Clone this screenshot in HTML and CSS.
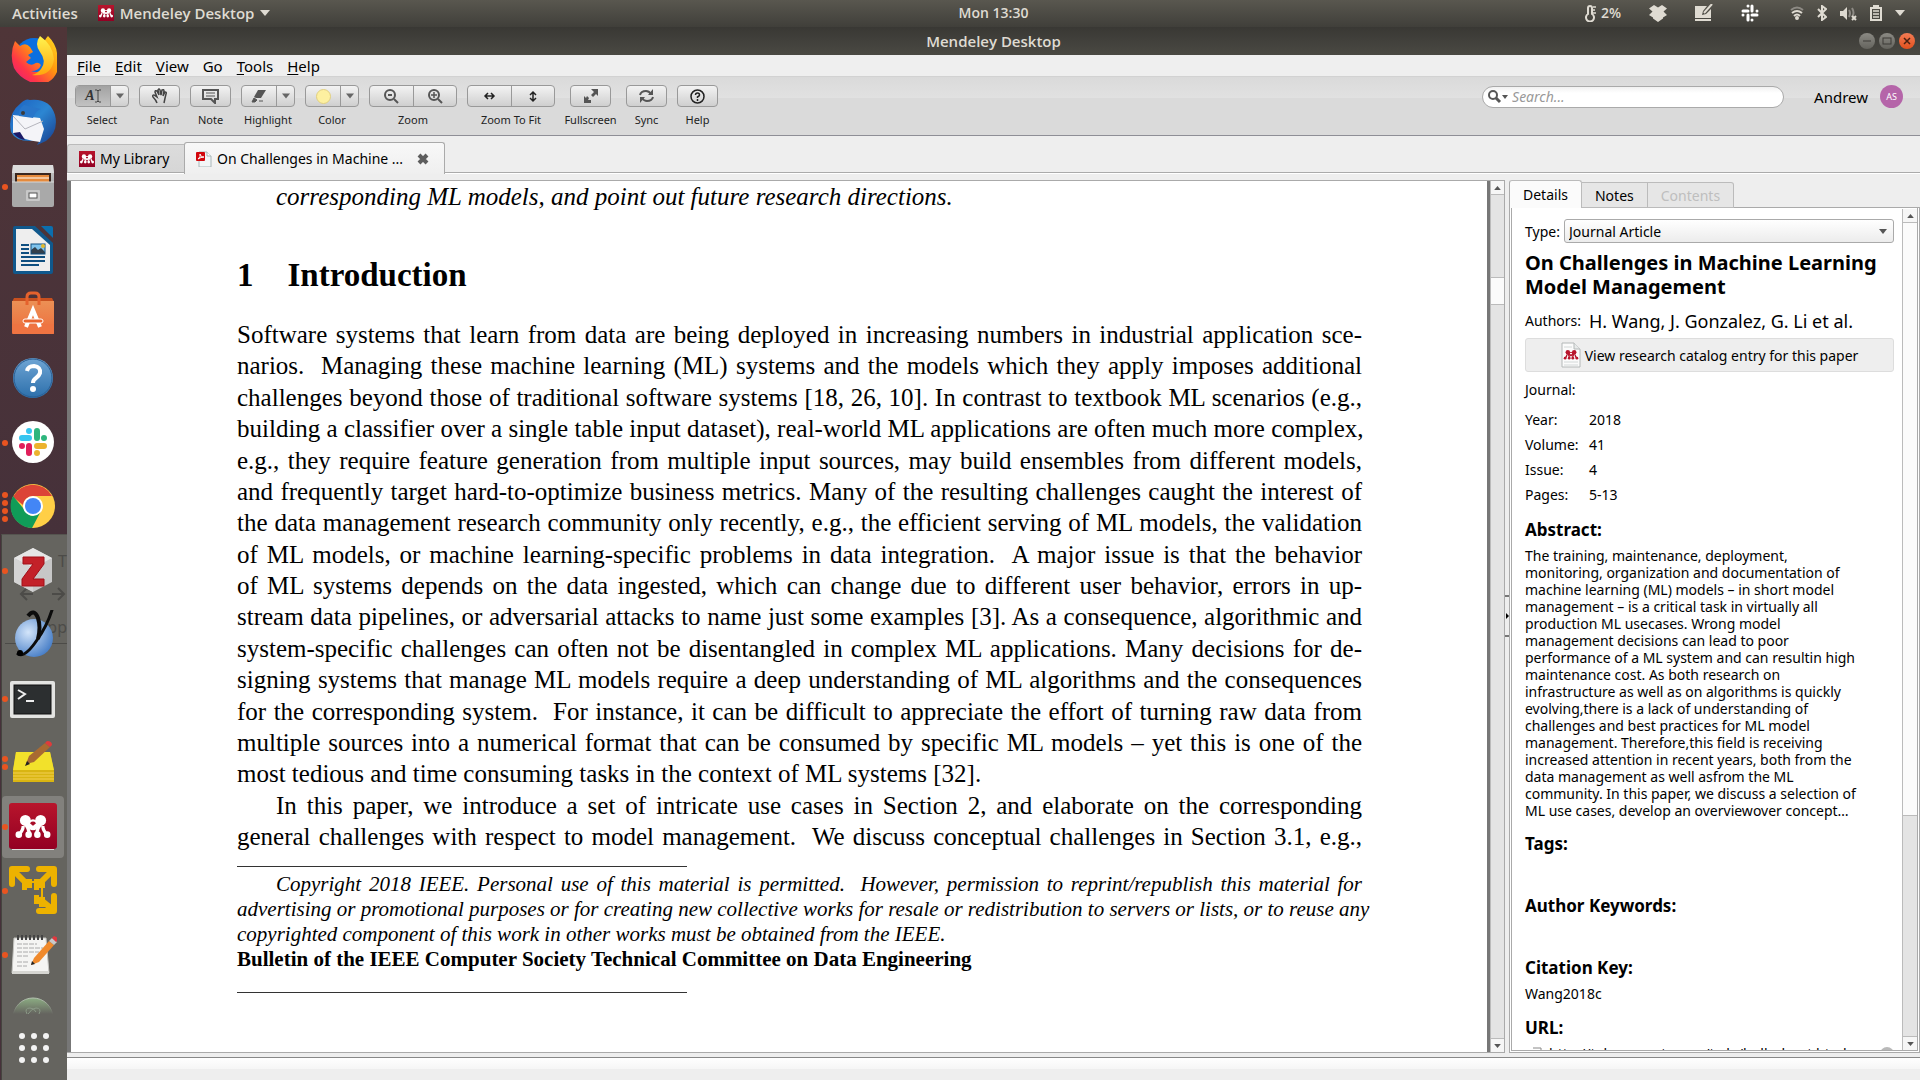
FILE: index.html
```html
<!DOCTYPE html>
<html lang="en">
<head>
    <meta charset="UTF-8">
    <meta name="viewport" content="width=device-width, initial-scale=1.0">
    <title>Mendeley Desktop</title>
    <link rel="stylesheet" href="styles.css">
</head>
<body>

  <!-- shared symbols -->
  <svg class="defs" aria-hidden="true">
    <defs>
      <linearGradient id="red" x1="0" y1="0" x2="0" y2="1"><stop offset="0" stop-color="#b8152c"/><stop offset="1" stop-color="#930023"/></linearGradient>
      <linearGradient id="blue" x1="0" y1="0" x2="0" y2="1"><stop offset="0" stop-color="#6fa5d4"/><stop offset="1" stop-color="#2c6fab"/></linearGradient>
      <linearGradient id="orange" x1="0" y1="0" x2="0" y2="1"><stop offset="0" stop-color="#ec9055"/><stop offset="1" stop-color="#ee6d3c"/></linearGradient>
      <linearGradient id="fox" x1="1" y1="0" x2="0" y2="1"><stop offset="0" stop-color="#ffe226"/><stop offset=".4" stop-color="#ff980e"/><stop offset=".7" stop-color="#ff3647"/><stop offset="1" stop-color="#e31587"/></linearGradient>
      <linearGradient id="flame" x1="0" y1="0" x2="0" y2="1"><stop offset="0" stop-color="#fff44f"/><stop offset="1" stop-color="#ffa60e"/></linearGradient>
      <linearGradient id="bird" x1="0" y1="0" x2="1" y2="1"><stop offset="0" stop-color="#1b5fc0"/><stop offset=".5" stop-color="#2c86d2"/><stop offset="1" stop-color="#173a8a"/></linearGradient>
      <linearGradient id="steel" x1="0" y1="0" x2="0" y2="1"><stop offset="0" stop-color="#c9c9c9"/><stop offset="1" stop-color="#8f8f8f"/></linearGradient>
      <radialGradient id="globe" cx=".35" cy=".35" r=".7"><stop offset="0" stop-color="#d3e5fa"/><stop offset="1" stop-color="#4a80c8"/></radialGradient>
      <linearGradient id="fade" x1="0" y1="0" x2="0" y2="1"><stop offset="0" stop-color="#8cad83"/><stop offset=".4" stop-color="#65645f"/></linearGradient>
      <linearGradient id="rim" x1="0" y1="0" x2="0" y2="1"><stop offset="0" stop-color="#b5c4b1"/><stop offset=".4" stop-color="#65645f"/></linearGradient>
      <symbol id="mendeley" viewBox="0 0 32 22">
        <path d="M3 18 Q7 14 7 10 M13 18 Q12 12 9 8 M16 12 L9 6 M16 12 L23 6 M19 18 Q20 12 23 8 M29 18 Q25 14 25 10" stroke="currentColor" stroke-width="3" fill="none"/>
        <circle cx="9" cy="5" r="5" fill="currentColor"/><circle cx="23" cy="5" r="5" fill="currentColor"/>
        <circle cx="16" cy="9" r="4" fill="none" stroke="currentColor" stroke-width="2"/>
        <circle cx="3" cy="18" r="3" fill="currentColor"/><circle cx="12" cy="18" r="3" fill="currentColor"/>
        <circle cx="20" cy="18" r="3" fill="currentColor"/><circle cx="29" cy="18" r="3" fill="currentColor"/>
      </symbol>
      <symbol id="logo" viewBox="0 0 16 16">
        <rect width="16" height="16" fill="url(#red)"/>
        <use href="#mendeley" x="1" y="3" width="14" height="10" color="#fff"/>
      </symbol>
      <symbol id="caret" viewBox="0 0 10 6"><path d="M0 0h10L5 6z" fill="currentColor"/></symbol>
      <symbol id="caret-up" viewBox="0 0 10 6"><path d="M0 6h10L5 0z" fill="currentColor"/></symbol>
    </defs>
  </svg>

  <header class="topbar">
    <div class="topbar-left">
      <a href="#">Activities</a>
      <a href="#" class="app-menu">
        <svg width="16" height="16"><use href="#logo"/></svg>
        Mendeley Desktop
        <svg width="10" height="6"><use href="#caret"/></svg>
      </a>
    </div>
    <time>Mon 13:30</time>
    <div class="tray">
      <span class="temp">
        <svg width="12" height="18" viewBox="0 0 12 18"><path d="M3 10V4a2 2 0 0 1 4 0v6a4 4 0 1 1-4 0z" fill="none" stroke="#dfdbd2" stroke-width="2"/><path d="M8 3h3M8 6h2M8 9h3" stroke="#dfdbd2" stroke-width="1.5"/></svg>
        2%
      </span>
      <svg class="tray-app" width="18" height="18" viewBox="0 0 18 18"><path d="M5 1l4 2.500 4-2.500 5 3.500-3.500 3L18 11l-4 2.500v1L9 18l-5-3.500v-1L0 11l3.500-3.500L0 4.500z" fill="#dfdbd2"/></svg>
      <svg class="tray-app" width="18" height="18" viewBox="0 0 18 18"><path d="M0 2h12L8 7l-1 4 4-1 5-5v9H0zM0 15h16v2H0z" fill="#dfdbd2"/><path d="M9 9L17 0" stroke="#dfdbd2" stroke-width="2"/></svg>
      <svg class="tray-app" width="18" height="18" viewBox="0 0 18 18"><path d="M7 7H2M7 2v0M11 7V2M16 7h0M7 11v5M2 11h0M11 11h5M11 16v0" stroke="#fff" stroke-width="3" stroke-linecap="round"/></svg>
      <svg class="tray-wifi" width="14" height="14" viewBox="0 0 14 14" fill="none" stroke="#dfdbd2" stroke-width="2"><path d="M1 4q6-5 12 0" stroke="#8d8a84"/><path d="M2 7q5-4 10 0M4 10q3-3 6 0"/><circle cx="7" cy="12" r="1"/></svg>
      <svg width="10" height="16" viewBox="0 0 10 16"><path d="M1 4l8 8-4 3V1l4 3-8 8" fill="none" stroke="#dfdbd2" stroke-width="2"/></svg>
      <svg width="17" height="15" viewBox="0 0 17 15"><path d="M0 5h3l4-4v13l-4-4H0z" fill="#dfdbd2"/><path d="M9 4q2 3 0 7M12 2q3 5 0 9" fill="none" stroke="#8d8a84" stroke-width="2"/><path d="M12 10l4 4M16 10l-4 4" stroke="#dfdbd2" stroke-width="2"/></svg>
      <svg width="12" height="16" viewBox="0 0 12 16"><path d="M1 3h10v12H1zM3 1h6" fill="none" stroke="#dfdbd2" stroke-width="2"/><path d="M3 6h6M3 9h6M3 12h6" stroke="#dfdbd2" stroke-width="1.500"/></svg>
      <svg width="10" height="6"><use href="#caret"/></svg>
    </div>
  </header>

  <div class="desktop">

    <nav class="dock" aria-label="Dock">
      <div class="behind" aria-hidden="true">
        <span>T</span>
        <svg width="48" height="14" viewBox="0 0 48 14"><path d="M14 7H2M8 1L2 7l6 6M33 7h12M39 1l6 6-6 6" fill="none" stroke="#4c4b48" stroke-width="2"/></svg>
        <span class="line">App</span>
      </div>

      <button class="dock-item" aria-label="Firefox">
        <svg viewBox="0 0 48 48"><circle cx="25" cy="23" r="19" fill="#0a6fe0"/><path d="M6 7l5 5q6-4 10 1l3 5-5 3 3 3-5 4q4 4 8 2 4-3 7 1-2 6-10 6 8 3 14-3 5-7 0-15-4-10 3-17 8 8 9 17 3 3 2 12-3 17-19 20Q12 47 5 34 0 20 6 7z" fill="url(#fox)"/><path d="M31 2q-6 8 0 16 7 9 1 17-4 5-9 6 20 2 22-16Q44 11 31 2z" fill="url(#flame)"/></svg>
      </button>
      <button class="dock-item" aria-label="Thunderbird">
        <svg viewBox="0 0 48 48"><path d="M12 5q5-5 9-3 20-2 25 15 4 16-9 26l-9 4 3-5Q8 46 2 34-2 16 12 5z" fill="url(#bird)"/><path d="M4 17l27 3 4 11-4 13Q14 42 4 35z" fill="#f4f4f8"/><path d="M4 18l12 13 18-8" fill="none" stroke="#b5b5bd"/><path d="M15 7q-6 4-5 11l14 2q3-8 8-9" fill="#2976ca"/><path d="M4 35q5 6 12 7l-5-8z" fill="#1c1b68"/><circle cx="14" cy="15" r="2" fill="#3b3b3b"/></svg>
      </button>
      <button class="dock-item" aria-label="Files">
        <i class="dot"></i>
        <svg viewBox="0 0 48 48"><path d="M4 3h40l1 8v30q0 2-2 2H5q-2 0-2-2V11z" fill="url(#steel)"/><path d="M4 3h40l1 8H3z" fill="#dcdcdc"/><path d="M6 11h36v9H6z" fill="#3a2720"/><path d="M8 13h32v8H8z" fill="#e58a3c"/><path d="M8 16h32" stroke="#fff" stroke-width="1"/><path d="M3 20h42v23q0 2-2 2H5q-2 0-2-2z" fill="#a9a9a9"/><path d="M3 20h42" stroke="#d8d8d8"/><rect x="17" y="28" width="14" height="11" rx="1" fill="#c8c8c8"/><rect x="20" y="31" width="8" height="5" fill="#fff" stroke="#555"/></svg>
      </button>
      <button class="dock-item" aria-label="Writer">
        <svg viewBox="0 0 48 48"><path d="M6 0h20l18 17v29q0 2-2 2H6q-2 0-2-2V2q0-2 2-2z" fill="#10588c"/><path d="M32 0h10q2 0 2 2v10z" fill="#0b6fae"/><path d="M7 3h16l18 16v26H7z" fill="#eee"/><path d="M12 19h8M12 23h8M12 27h8M12 31h24M12 35h24M12 39h18" stroke="#0f4f80" stroke-width="2"/><rect x="22" y="18" width="14" height="10" fill="#7fc3ec"/><path d="M22 28v-4l4-3 3 3 3-2 4 4v2z" fill="#33404c"/><rect x="22" y="18" width="14" height="10" fill="none" stroke="#0f4f80"/><circle cx="34" cy="20" r="2" fill="#e5b92a"/></svg>
      </button>
      <button class="dock-item" aria-label="Ubuntu Software">
        <svg viewBox="0 0 48 48"><path d="M5 8h38l2 4H3z" fill="#c8501f"/><path d="M3 11h42v32q0 1-1 1H4q-1 0-1-1z" fill="url(#orange)"/><path d="M3 34h42v9q0 1-1 1H4z" fill="#ef7442"/><path d="M18 15V7q0-4 4-4h4q4 0 4 4v8" fill="none" stroke="#e5622d" stroke-width="3"/><path d="M17 37l7-17 7 17" fill="none" stroke="#fff" stroke-width="4"/><rect x="14" y="29" width="20" height="4" rx="2" fill="#e9652f" stroke="#fff"/></svg>
      </button>
      <button class="dock-item" aria-label="Help">
        <svg viewBox="0 0 48 48"><circle cx="24" cy="24" r="20" fill="url(#blue)"/><circle cx="24" cy="24" r="19" fill="none" stroke="#2a5f94" stroke-width="1"/><path d="M18 17q1-5 7-5 7 1 6 7-1 3-4 5-3 2-3 5" fill="none" stroke="#fff" stroke-width="4"/><circle cx="24" cy="35" r="3" fill="#fff"/></svg>
      </button>
      <button class="dock-item" aria-label="Slack">
        <i class="dot"></i>
        <svg viewBox="0 0 48 48"><circle cx="24" cy="24" r="21" fill="#fff"/><g fill="none" stroke-width="6" stroke-linecap="round"><path d="M20 20h-7M20 13v0" stroke="#36c5f0"/><path d="M28 20v-7M35 20v0" stroke="#2eb67d"/><path d="M20 28v7M13 28v0" stroke="#e01e5a"/><path d="M28 28h7M28 35v0" stroke="#ecb22e"/></g></svg>
      </button>
      <button class="dock-item" aria-label="Chrome">
        <i class="dot"></i><i class="dot"></i><i class="dot"></i><i class="dot"></i>
        <svg viewBox="0 0 48 48"><circle cx="24" cy="24" r="22" fill="#ffcf46"/><path d="M4 15A22 22 0 0 1 43 14H24a10 10 0 0 0-10 9z" fill="#dc4437"/><path d="M4 14A22 22 0 0 0 23 46l9-17-10 5-8-8z" fill="#109c58"/><circle cx="24" cy="24" r="10" fill="#fff"/><circle cx="24" cy="24" r="8" fill="#4386f5"/></svg>
      </button>
      <button class="dock-item" aria-label="Zotero">
        <i class="dot"></i>
        <svg viewBox="0 0 48 48"><path d="M24 2l19 10v24L24 46 5 36V12z" fill="#c7c7c7"/><path d="M24 2l19 10-19 10L5 12z" fill="#e6e6e6"/><path d="M24 22v24L5 36V12z" fill="#d4d4d4"/><path d="M14 11h21v7L24 33h11v7H13v-7l11-15H14z" fill="#c32129" stroke="#a01018"/></svg>
      </button>
      <button class="dock-item" aria-label="Yate">
        <svg viewBox="0 0 48 48"><circle cx="25" cy="28" r="19" fill="url(#globe)"/><path d="M19 6q6-8 10 2 3 9 0 21" fill="none" stroke="#0c0c0c" stroke-width="4"/><path d="M43 0Q38 16 28 30 16 48 9 44" fill="none" stroke="#0c0c0c" stroke-width="3" stroke-linecap="round"/><circle cx="11" cy="43" r="3"/></svg>
      </button>
      <button class="dock-item" aria-label="Terminal">
        <i class="dot"></i>
        <svg viewBox="0 0 48 48"><rect x="1" y="7" width="45" height="37" rx="2" fill="#e4e4e2"/><rect x="5" y="11" width="37" height="29" fill="#2c2f30" stroke="#111"/><path d="M9 16l7 4-7 5" fill="none" stroke="#eee" stroke-width="2"/><path d="M17 27h8" stroke="#eee" stroke-width="2"/></svg>
      </button>
      <button class="dock-item" aria-label="Notes">
        <i class="dot"></i><i class="dot"></i>
        <svg viewBox="0 0 48 48"><path d="M7 14h34l4 19v11H4V33z" fill="#d9b512"/><path d="M7 14h34l4 18H4z" fill="#f2e12b"/><path d="M4 35h41M4 38h41M4 41h41" stroke="#f3cf52"/><path d="M17 26l3-8L36 5l5 4-16 15z" fill="#a86a32"/><path d="M36 5l2-2q5 0 5 4l-2 2z" fill="#e03b3b"/><path d="M16 28l2-5 3 3z" fill="#222"/></svg>
      </button>
      <button class="dock-item active" aria-label="Mendeley Desktop">
        <i class="dot"></i>
        <svg viewBox="0 0 48 48"><rect y="1" width="48" height="46" rx="3" fill="url(#red)"/><path d="M3 47.500h42" stroke="#ddd"/><use href="#mendeley" x="5" y="13" width="38" height="24" color="#fff"/></svg>
      </button>
      <button class="dock-item" aria-label="yEd">
        <i class="dot"></i>
        <svg viewBox="0 0 48 48"><path d="M3 18V3h15M5 5l11 11M45 18V3H30M43 5L32 16M30 45h15V30M43 43L32 34" fill="none" stroke="#edb200" stroke-width="6" stroke-linecap="round" stroke-linejoin="round"/><path d="M13 13h10v9h-5v2h-5zM25 13h11v9h-6v2h-5zM25 29h5v2h6v10h-6v-3h-5z" fill="#edb200"/><path d="M20 16h12M33 20v14" stroke="#edb200" stroke-width="2"/></svg>
      </button>
      <button class="dock-item" aria-label="Text Editor">
        <i class="dot"></i>
        <svg viewBox="0 0 48 48"><path d="M5 8h32l3 35H3z" fill="#f5f5f3" stroke="#c4c4c0"/><path d="M3 41h37v3H3z" fill="#d6d6d2"/><path d="M8 14h20M8 18h26M8 22h22M8 26h12M8 32h12M8 36h10" stroke="#aaa" stroke-dasharray="5 1"/><path d="M9 5v5M13 5v5M17 5v5M21 5v5M25 5v5M29 5v5M33 5v5" stroke="#444" stroke-width="2"/><path d="M22 35l3-7L40 11l5 4-15 17z" fill="#f08a2c"/><path d="M40 11l3-3 5 4-3 3z" fill="#c9c9c9"/><path d="M43 8l2-2q4 1 4 4l-2 2z" fill="#e0383f"/><path d="M22 35l1-4 3 3z" fill="#222"/></svg>
      </button>
      <button class="dock-item cut" aria-label="Atom">
        <svg viewBox="0 0 48 48"><circle cx="24" cy="24" r="20" fill="url(#fade)" stroke="url(#rim)"/><path d="M18 20q-3-6 3-6 4 0 6 4M30 20q3-6-3-6-4 0-8 6" fill="none" stroke="#8b9a87"/></svg>
      </button>
      <button class="show-apps" aria-label="Show Applications">
        <svg width="30" height="30" viewBox="0 0 30 30" fill="#f3f3f3"><circle cx="3" cy="3" r="3"/><circle cx="15" cy="3" r="3"/><circle cx="27" cy="3" r="3"/><circle cx="3" cy="15" r="3"/><circle cx="15" cy="15" r="3"/><circle cx="27" cy="15" r="3"/><circle cx="3" cy="27" r="3"/><circle cx="15" cy="27" r="3"/><circle cx="27" cy="27" r="3"/></svg>
      </button>
    </nav>

    <main class="window">
      <div class="titlebar">
        <span class="title">Mendeley Desktop</span>
        <div class="window-buttons">
          <button aria-label="Minimize"><svg viewBox="0 0 16 16"><path d="M4 8h8" stroke="#3c3b37"/></svg></button>
          <button aria-label="Maximize"><svg viewBox="0 0 16 16"><rect x="4" y="5" width="8" height="6" fill="none" stroke="#3c3b37"/></svg></button>
          <button class="close" aria-label="Close"><svg viewBox="0 0 16 16"><path d="M5 5l6 6M11 5l-6 6" stroke="#4a2010" stroke-width="1.500"/></svg></button>
        </div>
      </div>

      <nav class="menubar">
        <a href="#"><u>F</u>ile</a>
        <a href="#"><u>E</u>dit</a>
        <a href="#"><u>V</u>iew</a>
        <a href="#">Go</a>
        <a href="#"><u>T</u>ools</a>
        <a href="#"><u>H</u>elp</a>
      </nav>

      <div class="toolbar">
        <div class="tool">
          <div class="buttons">
            <button class="main pressed" aria-label="Select"><span class="letter">A</span><svg width="6" height="14" viewBox="0 0 6 14"><path d="M0 1h2l1 1 1-1h2M3 2v10M0 13h2l1-1 1 1h2" fill="none" stroke="#444"/></svg></button>
            <button class="arrow" aria-label="Select options"><svg width="10" height="6"><use href="#caret"/></svg></button>
          </div>
          <span>Select</span>
        </div>
        <div class="tool">
          <div class="buttons">
            <button class="single" aria-label="Pan"><svg width="18" height="18" viewBox="0 0 18 18"><path d="M6 16q-1-3-4-6-1-2 1-2l3 2-2-5q0-2 2-1l2 4-1-5q1-2 2 0l1 5 1-5q2-1 2 1l-1 5 2-4q2 0 1 2-1 4-2 9" fill="none" stroke="#444" stroke-width="1.500"/></svg></button>
          </div>
          <span>Pan</span>
        </div>
        <div class="tool">
          <div class="buttons">
            <button class="single" aria-label="Note"><svg width="17" height="15" viewBox="0 0 17 15"><path d="M1 1h15v9h-3v4l-4-4H1z" fill="none" stroke="#555" stroke-width="2"/><path d="M4 4h9M4 7h9" stroke="#555"/></svg></button>
          </div>
          <span>Note</span>
        </div>
        <div class="tool">
          <div class="buttons">
            <button class="main" aria-label="Highlight"><svg width="16" height="14" viewBox="0 0 16 14"><path d="M7 1h8l-5 8H5L3 8z" fill="#555"/><path d="M3 9l3 2-2 2H1zM8 12h4" fill="#555" stroke="#555"/></svg></button>
            <button class="arrow" aria-label="Highlight options"><svg width="10" height="6"><use href="#caret"/></svg></button>
          </div>
          <span>Highlight</span>
        </div>
        <div class="tool">
          <div class="buttons">
            <button class="main" aria-label="Color"><i class="swatch"></i></button>
            <button class="arrow" aria-label="Color options"><svg width="10" height="6"><use href="#caret"/></svg></button>
          </div>
          <span>Color</span>
        </div>
        <div class="tool">
          <div class="buttons">
            <button class="wide" aria-label="Zoom out"><svg width="15" height="15" viewBox="0 0 15 15"><circle cx="6" cy="6" r="5" fill="none" stroke="#555" stroke-width="2"/><path d="M4 6h4" stroke="#555" stroke-width="2"/><path d="M10 10l4 4" stroke="#555" stroke-width="2"/></svg></button>
            <button class="wide" aria-label="Zoom in"><svg width="15" height="15" viewBox="0 0 15 15"><circle cx="6" cy="6" r="5" fill="none" stroke="#555" stroke-width="2"/><path d="M3 6h6M6 3v6" stroke="#555" stroke-width="1.500"/><path d="M10 10l4 4" stroke="#555" stroke-width="2"/></svg></button>
          </div>
          <span>Zoom</span>
        </div>
        <div class="tool">
          <div class="buttons">
            <button class="wide" aria-label="Fit width"><svg width="13" height="12" viewBox="0 0 13 12"><path d="M2 6h9M5 3L2 6l3 3M8 3l3 3-3 3" fill="none" stroke="#222" stroke-width="1.500"/></svg></button>
            <button class="wide" aria-label="Fit height"><svg width="12" height="13" viewBox="0 0 12 13"><path d="M6 2v9M3 5l3-3 3 3M3 8l3 3 3-3" fill="none" stroke="#222" stroke-width="1.500"/></svg></button>
          </div>
          <span>Zoom To Fit</span>
        </div>
        <div class="tool full">
          <div class="buttons">
            <button class="single" aria-label="Fullscreen"><svg width="14" height="14" viewBox="0 0 14 14"><path d="M7 0h7v7l-2-2-3 3-2-2 3-3zM0 7l2 2 1-2 2 2-1 2h3v3H0z" fill="#555"/></svg></button>
          </div>
          <span>Fullscreen</span>
        </div>
        <div class="tool">
          <div class="buttons">
            <button class="single" aria-label="Sync"><svg width="15" height="14" viewBox="0 0 15 14"><path d="M1 6q1-4 6-4 3 0 5 3M14 8q-1 4-6 4-3 0-5-3" fill="none" stroke="#555" stroke-width="2"/><path d="M14 0v6H9zM1 14V8h5z" fill="#555"/></svg></button>
          </div>
          <span>Sync</span>
        </div>
        <div class="tool">
          <div class="buttons">
            <button class="single" aria-label="Help"><svg width="15" height="15" viewBox="0 0 15 15"><circle cx="7.500" cy="7.500" r="6.500" fill="none" stroke="#222" stroke-width="1.500"/><path d="M5.500 6q0-2 2-2t2 2q0 1-2 2v1M7.500 10v2" fill="none" stroke="#222" stroke-width="1.500"/></svg></button>
          </div>
          <span>Help</span>
        </div>

        <div class="account">
          <label class="search">
            <svg width="20" height="14" viewBox="0 0 20 14"><circle cx="5" cy="5" r="4" fill="none" stroke="#555" stroke-width="2"/><path d="M8 8l4 4" stroke="#555" stroke-width="3"/><path d="M14 5h6l-3 4z" fill="#555"/></svg>
            <input type="text" placeholder="Search..." aria-label="Search">
          </label>
          <span class="user">Andrew</span>
          <span class="avatar">AS</span>
        </div>
      </div>

      <div class="tabs">
        <a href="#" class="tab">
          <svg width="16" height="16"><use href="#logo"/></svg>
          My Library
        </a>
        <div class="tab current">
          <svg width="16" height="16" viewBox="0 0 16 16"><path d="M3 1h8l4 4v11H3z" fill="#f2f6f7" stroke="#a9b6b8"/><path d="M11 1v4h4" fill="#fff" stroke="#a9b6b8"/><rect y="1" width="9" height="9" rx="1" fill="#d2060c"/><path d="M2 8q3-2 2-5 1 4 4 3-3 0-6 2" fill="none" stroke="#fff"/></svg>
          <span>On Challenges in Machine ...</span>
          <button aria-label="Close tab"><svg width="12" height="12" viewBox="0 0 12 12"><path d="M2 2l8 8M10 2l-8 8" stroke="#5d5d5d" stroke-width="4"/></svg></button>
        </div>
      </div>

      <div class="content">
        <div class="viewer">
          <article class="page">
            <p class="summary">corresponding ML models, and point out future research directions.</p>
            <h1><span>1</span>Introduction</h1>
            <div class="body-text">
              <span>Software systems that learn from data are being deployed in increasing numbers in industrial application sce-</span>
              <span>narios.&nbsp; Managing these machine learning (ML) systems and the models which they apply imposes additional</span>
              <span>challenges beyond those of traditional software systems [18, 26, 10]. In contrast to textbook ML scenarios (e.g.,</span>
              <span>building a classifier over a single table input dataset), real-world ML applications are often much more complex,</span>
              <span>e.g., they require feature generation from multiple input sources, may build ensembles from different models,</span>
              <span>and frequently target hard-to-optimize business metrics. Many of the resulting challenges caught the interest of</span>
              <span>the data management research community only recently, e.g., the efficient serving of ML models, the validation</span>
              <span>of ML models, or machine learning-specific problems in data integration.&nbsp; A major issue is that the behavior</span>
              <span>of ML systems depends on the data ingested, which can change due to different user behavior, errors in up-</span>
              <span>stream data pipelines, or adversarial attacks to name just some examples [3]. As a consequence, algorithmic and</span>
              <span>system-specific challenges can often not be disentangled in complex ML applications. Many decisions for de-</span>
              <span>signing systems that manage ML models require a deep understanding of ML algorithms and the consequences</span>
              <span>for the corresponding system.&nbsp; For instance, it can be difficult to appreciate the effort of turning raw data from</span>
              <span>multiple sources into a numerical format that can be consumed by specific ML models – yet this is one of the</span>
              <span class="last">most tedious and time consuming tasks in the context of ML systems [32].</span>
              <span class="indent">In this paper, we introduce a set of intricate use cases in Section 2, and elaborate on the corresponding</span>
              <span>general challenges with respect to model management.&nbsp; We discuss conceptual challenges in Section 3.1, e.g.,</span>
            </div>
            <hr>
            <div class="footnote">
              <span class="indent">Copyright 2018 IEEE. Personal use of this material is permitted.&nbsp; However, permission to reprint/republish this material for</span>
              <span>advertising or promotional purposes or for creating new collective works for resale or redistribution to servers or lists, or to reuse any</span>
              <span class="last">copyrighted component of this work in other works must be obtained from the IEEE.</span>
              <strong>Bulletin of the IEEE Computer Society Technical Committee on Data Engineering</strong>
            </div>
            <hr class="end">
          </article>
          <div class="scrollbar">
            <button aria-label="Scroll up"><svg width="7" height="4"><use href="#caret-up"/></svg></button>
            <div class="track"><div class="thumb"></div></div>
            <button aria-label="Scroll down"><svg width="7" height="4"><use href="#caret"/></svg></button>
          </div>
        </div>

        <div class="splitter"><svg width="4" height="42" viewBox="0 0 4 42"><path d="M0 1h4M0 41h4" stroke="#000"/><path d="M1 18l3 3-3 3z"/></svg></div>

        <aside class="side">
          <nav class="side-tabs">
            <button class="on">Details</button>
            <button>Notes</button>
            <button disabled>Contents</button>
          </nav>
          <div class="pane">
            <div class="details">
              <div class="type">
                <label for="type">Type:</label>
                <div class="select">
                  <select id="type"><option>Journal Article</option></select>
                  <svg width="8" height="5"><use href="#caret"/></svg>
                </div>
              </div>
              <h2>On Challenges in Machine Learning<br>Model Management</h2>
              <div class="field authors"><span>Authors:</span><b>H. Wang, J. Gonzalez, G. Li et al.</b></div>
              <button class="catalog">
                <svg width="20" height="26" viewBox="0 0 20 26"><path d="M1 1h12l6 6v18H1z" fill="#fbfbfb" stroke="#b4b8b8"/><path d="M13 1v6h6" fill="#e7eaea" stroke="#b4b8b8"/><path d="M3 20h14M3 23h14M3 5h8" stroke="#d3d8d8"/><use href="#mendeley" x="2" y="8" width="16" height="10" color="#b8152c"/></svg>
                View research catalog entry for this paper
              </button>
              <div class="field journal"><span>Journal:</span></div>
              <div class="field"><span>Year:</span>2018</div>
              <div class="field"><span>Volume:</span>41</div>
              <div class="field"><span>Issue:</span>4</div>
              <div class="field"><span>Pages:</span>5-13</div>
              <h3>Abstract:</h3>
              <p class="abstract">
                The training, maintenance, deployment,<br>
                monitoring, organization and documentation of<br>
                machine learning (ML) models – in short model<br>
                management – is a critical task in virtually all<br>
                production ML usecases. Wrong model<br>
                management decisions can lead to poor<br>
                performance of a ML system and can resultin high<br>
                maintenance cost. As both research on<br>
                infrastructure as well as on algorithms is quickly<br>
                evolving,there is a lack of understanding of<br>
                challenges and best practices for ML model<br>
                management. Therefore,this field is receiving<br>
                increased attention in recent years, both from the<br>
                data management as well asfrom the ML<br>
                community. In this paper, we discuss a selection of<br>
                ML use cases, develop an overviewover concept…
              </p>
              <h3 class="empty">Tags:</h3>
              <h3 class="empty">Author Keywords:</h3>
              <h3>Citation Key:</h3>
              <p class="key">Wang2018c</p>
              <h3>URL:</h3>
              <div class="url">
                <svg width="14" height="14" viewBox="0 0 14 14"><path d="M5 1h8v9H5M1 4h6v9H1z" fill="none" stroke="#888"/><path d="M4 10l6-6M6 4h4v4" fill="none" stroke="#888"/></svg>
                <a href="#">http://tab.computer.org/tcde/bull_about.html</a>
                <svg width="14" height="14" viewBox="0 0 14 14"><circle cx="7" cy="7" r="7" fill="#b9b9b9"/><path d="M4 4l6 6M10 4l-6 6" stroke="#fff" stroke-width="2"/></svg>
              </div>
            </div>
            <div class="scrollbar">
              <button aria-label="Scroll up"><svg width="7" height="4"><use href="#caret-up"/></svg></button>
              <div class="track top"><div class="thumb"></div></div>
              <button aria-label="Scroll down"><svg width="7" height="4"><use href="#caret"/></svg></button>
            </div>
          </div>
        </aside>
      </div>

      <footer class="statusbar"></footer>
    </main>
  </div>
</body>
</html>
```
FILE: styles.css
```css
*{
    box-sizing: border-box;
}
body{
    margin: 0;
    height: 100vh;
    display: flex;
    flex-direction: column;
    overflow: hidden;
    font-family: "Noto Sans", "Open Sans", sans-serif;
    font-size: 14px;
    color: #000;
    background-color: #eee;
}
button{
    font: inherit;
    color: inherit;
    padding: 0;
    border: none;
    background: none;
}
a{
    color: inherit;
    text-decoration: none;
}
svg{
    display: block;
    flex-shrink: 0;
}
.defs{
    position: absolute;
    width: 0;
    height: 0;
}

/* system bar */
.topbar{
    height: 27px;
    flex-shrink: 0;
    display: grid;
    grid-template-columns: 1fr auto 1fr;
    align-items: center;
    padding: 0 15px 1px 12px;
    background: linear-gradient(#59574f, #403f3a);
    color: #dfdbd2;
    font-family: "Open Sans", "Noto Sans", sans-serif;
    font-size: 15px;
    font-weight: 600;
    line-height: 20px;
}
.topbar time{
    margin-left: 70px;
    font-size: 14px;
}
.topbar-left, .app-menu, .tray, .temp{
    display: flex;
    align-items: center;
}
.topbar-left{
    gap: 20px;
}
.app-menu{
    gap: 6px;
}
.tray{
    justify-content: flex-end;
    gap: 13px;
    font-size: 14px;
}
.temp{
    gap: 4px;
}
.tray-app{
    margin-left: 15px;
}
.tray-wifi{
    margin-left: 18px;
}
.desktop{
    flex: 1;
    min-height: 0;
    display: flex;
}

/* dock */
.dock{
    position: relative;
    width: 67px;
    flex-shrink: 0;
    display: flex;
    flex-direction: column;
    background: linear-gradient(#4f3538, #46313a 507px);
}
.behind{
    position: absolute;
    left: 1px;
    right: 0;
    top: 507px;
    bottom: 0;
    display: flex;
    flex-direction: column;
    align-items: flex-end;
    gap: 16px;
    padding: 16px 0 0 3px;
    border-top: 1px solid #55544f;
    border-left: 1px solid #45443f;
    background-color: #65645f;
    color: #4c4b48;
    font-size: 16px;
    line-height: 20px;
    overflow: hidden;
}
.behind .line{
    width: 100%;
    padding-bottom: 6px;
    border-bottom: 1px solid #4c4b48;
    text-align: right;
}
.dock-item{
    position: relative;
    height: 64px;
    flex-shrink: 0;
    display: flex;
    flex-direction: column;
    justify-content: center;
    gap: 2px;
    padding-left: 2px;
}
.dock-item svg{
    position: absolute;
    left: 9px;
    top: 7px;
    width: 48px;
    height: 48px;
}
.dot{
    width: 6px;
    height: 6px;
    border-radius: 50%;
    background-color: #e95420;
}
.active::before{
    content: "";
    position: absolute;
    left: 2px;
    top: 1px;
    width: 62px;
    height: 62px;
    border-radius: 4px;
    background-color: #82817d;
}
.active .dot{
    z-index: 1;
}
.cut{
    height: 28px;
    overflow: hidden;
}
.show-apps{
    position: relative;
    flex: 1;
    display: flex;
    justify-content: center;
    align-items: center;
}

/* window */
.window{
    flex: 1;
    min-width: 0;
    display: flex;
    flex-direction: column;
}
.titlebar{
    height: 28px;
    flex-shrink: 0;
    display: grid;
    grid-template-columns: 1fr auto 1fr;
    align-items: center;
    padding: 0 5px 1px;
    background: linear-gradient(#393834, #4a4943);
    color: #dfdbd2;
    font-family: "Open Sans", "Noto Sans", sans-serif;
    font-size: 15px;
    font-weight: 600;
    line-height: 20px;
}
.title{
    grid-column: 2;
}
.window-buttons{
    display: flex;
    justify-content: flex-end;
    gap: 4px;
}
.window-buttons button{
    width: 16px;
    height: 16px;
    border-radius: 50%;
    background: linear-gradient(#8b8a84, #64635d);
}
.window-buttons .close{
    background: linear-gradient(#f37c55, #e2501d);
}
.menubar{
    height: 21px;
    flex-shrink: 0;
    display: flex;
    align-items: center;
    gap: 14px;
    padding-left: 10px;
    background-color: #efefef;
    font-size: 15px;
    line-height: 20px;
}
.menubar u{
    text-underline-offset: 2px;
}

.toolbar{
    height: 60px;
    flex-shrink: 0;
    display: flex;
    gap: 10px;
    padding: 8px 17px 0 8px;
    border-top: 1px solid #d2d2d2;
    border-bottom: 1px solid #8e8e96;
    background: linear-gradient(#dadada, #e1e1e1 21px, #dadada 21px);
}
.tool{
    display: flex;
    flex-direction: column;
    align-items: center;
    gap: 5px;
    font-size: 11px;
    line-height: 16px;
    color: #222;
}
.full{
    width: 51px;
}
.buttons{
    display: flex;
    height: 22px;
    border: 1px solid #999;
    border-radius: 4px;
    background: linear-gradient(#f3f3f3, #cfcfcf);
    overflow: hidden;
}
.buttons button{
    display: flex;
    justify-content: center;
    align-items: center;
    color: #666;
}
.buttons button + button{
    border-left: 1px solid #999;
}
.main{
    width: 34px;
}
.arrow{
    width: 18px;
}
.single{
    width: 39px;
}
.wide{
    width: 43px;
}
.pressed{
    background: linear-gradient(#a2a2a2, #c2c2c2);
}
.arrow svg{
    width: 8px;
}
.letter{
    font-family: "Liberation Serif", serif;
    font-size: 14px;
    font-weight: bold;
    font-style: italic;
    color: #333;
}
.swatch{
    width: 15px;
    height: 15px;
    border-radius: 50%;
    border: 1px solid #e0cf80;
    background-color: #fdf0a0;
}
.account{
    flex: 1;
    display: flex;
    justify-content: flex-end;
    align-items: center;
    height: 23px;
}
.search{
    width: 302px;
    height: 22px;
    display: flex;
    align-items: center;
    gap: 4px;
    padding: 0 5px;
    margin-right: 30px;
    border: 1px solid #aaa;
    border-radius: 11px;
    background: linear-gradient(#f1f1f1, #fff 6px);
}
.search input{
    flex: 1;
    min-width: 0;
    padding: 0;
    border: none;
    outline: none;
    background: none;
    font: inherit;
}
.search input::placeholder{
    color: #999;
    font-style: italic;
}
.user{
    margin-right: 12px;
    font-size: 15px;
}
.avatar{
    width: 23px;
    height: 23px;
    border-radius: 50%;
    background-color: #b565a9;
    color: #fff;
    font-size: 9px;
    line-height: 23px;
    text-align: center;
}

/* document tabs */
.tabs{
    height: 38px;
    flex-shrink: 0;
    display: flex;
    align-items: flex-end;
    margin-bottom: 6px;
    padding-top: 6px;
    box-shadow: inset 0 -1px #fff, inset 0 -2px #aaa;
}
.tab{
    height: 29px;
    display: flex;
    align-items: center;
    gap: 5px;
    width: 117px;
    padding-left: 11px;
    margin-bottom: 1px;
    border-top: 1px solid #bbb;
    border-left: 1px solid #bbb;
    border-bottom: 1px solid #aaa;
    border-radius: 3px 0 0 0;
    background: linear-gradient(#dcdcdc, #d6d6d6);
}
.current{
    width: 261px;
    height: 32px;
    padding-left: 11px;
    padding-right: 15px;
    margin-bottom: 0;
    border: 1px solid #aaa;
    border-bottom: none;
    border-radius: 3px 3px 0 0;
    background: linear-gradient(#f8f8f8, #efefef);
}
.current button{
    margin-left: auto;
}

/* viewer */
.content{
    flex: 1;
    min-height: 0;
    display: flex;
}
.viewer{
    flex: 1;
    min-width: 0;
    display: flex;
    border: solid #aaa;
    border-width: 1px 1px 1px 0;
}
.page{
    flex: 1;
    min-width: 0;
    padding: 0 125px 0 166px;
    border-left: 4px solid #777;
    border-right: 3px solid #777;
    background-color: #fff;
    font-family: "Liberation Serif", "Times New Roman", serif;
    font-size: 25px;
    line-height: 31px;
    overflow: hidden;
    white-space: nowrap;
}
.page span, .page strong{
    display: block;
}
.summary{
    margin: 0 0 43px;
    padding-left: 39px;
    font-style: italic;
}
h1{
    display: flex;
    gap: 34px;
    margin: 0 0 24px;
    font-size: 33px;
    line-height: 40px;
}
.body-text{
    display: flex;
    flex-direction: column;
    justify-content: space-between;
    height: 533px;
    margin-bottom: 14px;
    text-align-last: justify;
}
.page .last{
    text-align-last: left;
}
.indent{
    padding-left: 39px;
}
.page hr{
    width: 40%;
    margin: 0 0 5px;
    border: none;
    border-top: 1px solid #333;
}
.footnote{
    font-size: 21px;
    line-height: 25px;
    font-style: italic;
    text-align-last: justify;
}
.footnote strong{
    font-style: normal;
    text-align-last: left;
}
.page .end{
    margin-top: 20px;
}

.scrollbar{
    width: 15px;
    flex-shrink: 0;
    display: flex;
    flex-direction: column;
    border-left: 1px solid #bbb;
    background-color: #e4e4e4;
    color: #555;
}
.viewer .scrollbar{
    width: 14px;
}
.scrollbar button{
    height: 14px;
    display: flex;
    justify-content: center;
    align-items: center;
    background-color: #f6f6f6;
    border-bottom: 1px solid #bbb;
}
.scrollbar button:last-child{
    border-bottom: none;
    border-top: 1px solid #bbb;
}
.track{
    flex: 1;
    padding-top: 82px;
}
.thumb{
    height: 28px;
    border: solid #bbb;
    border-width: 1px 0;
    background-color: #fbfbfb;
}
.track.top{
    padding-top: 0;
}
.top .thumb{
    height: 73%;
    border-top: none;
}
.splitter{
    width: 4px;
    padding-top: 415px;
}

/* details panel */
.side{
    width: 411px;
    display: flex;
    flex-direction: column;
}
.side-tabs{
    height: 28px;
    flex-shrink: 0;
    display: flex;
    align-items: flex-end;
    box-shadow: inset 0 -1px #aaa;
}
.side-tabs button{
    height: 26px;
    padding: 0 13px;
    border: 1px solid #bbb;
    border-left: none;
    background-color: #e6e6e6;
}
.side-tabs .on{
    height: 28px;
    border-left: 1px solid #aaa;
    border-bottom: none;
    border-radius: 3px 3px 0 0;
    background-color: #fbfbfb;
}
.side-tabs button:disabled{
    color: #bebebe;
    border-radius: 0 3px 0 0;
}
.pane{
    flex: 1;
    min-height: 0;
    display: flex;
    padding-top: 1px;
    border: 3px double #aaa;
    border-top: none;
    background-color: #fff;
}
.details{
    flex: 1;
    min-width: 0;
    padding: 10px 8px 0 13px;
    overflow: hidden;
}
.type{
    display: flex;
    align-items: center;
    gap: 3px;
    margin-bottom: 8px;
}
.type label{
    width: 36px;
}
.select{
    position: relative;
    flex: 1;
}
.select select{
    width: 100%;
    height: 24px;
    padding: 0 4px;
    border: 1px solid #aaa;
    border-radius: 3px;
    appearance: none;
    background: linear-gradient(#fff, #ececec);
    color: #000;
    font: inherit;
}
.select svg{
    position: absolute;
    right: 7px;
    top: 10px;
    color: #555;
}
h2{
    margin: 0 0 9px;
    font-size: 20px;
    line-height: 24px;
    white-space: nowrap;
}
.field{
    display: flex;
    height: 25px;
    align-items: center;
}
.field span{
    width: 64px;
}
.authors{
    margin-bottom: 5px;
}
.field b{
    font-size: 18px;
    font-weight: normal;
}
.catalog{
    width: 100%;
    height: 34px;
    display: flex;
    justify-content: center;
    align-items: center;
    gap: 4px;
    margin-bottom: 5px;
    border: 1px solid #ddd;
    border-radius: 3px;
    background-color: #eee;
    white-space: nowrap;
}
.journal{
    margin-bottom: 5px;
}
h3{
    margin: 12px 0 6px;
    font-size: 17px;
    line-height: 22px;
}
.abstract{
    margin: 0 0 14px;
    line-height: 17px;
    white-space: nowrap;
}
.empty{
    margin-bottom: 40px;
}
.empty + h3{
    margin-top: 0;
}
.key{
    margin: 0 0 15px;
    line-height: 17px;
}
.url{
    display: flex;
    align-items: center;
    gap: 7px;
    line-height: 18px;
    padding-left: 3px;
}
.url a{
    flex: 1;
}

.statusbar{
    height: 23px;
    flex-shrink: 0;
    margin-top: 4px;
    border-top: 1px solid #888;
    background: linear-gradient(#fff, #f6f6f6 11px, #eee 11px);
}
```
